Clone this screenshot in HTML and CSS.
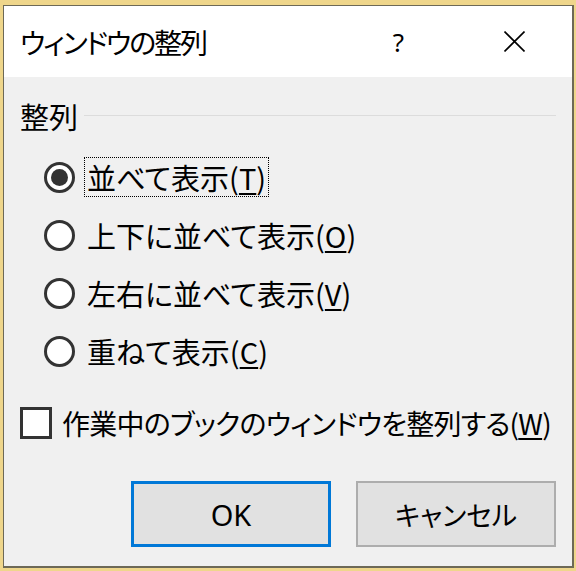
FILE: index.html
```html
<!DOCTYPE html>
<html lang="ja">
<head>
    <meta charset="UTF-8">
    <title>ウィンドウの整列</title>
    <link rel="stylesheet" href="styles.css">
</head>
<body>
    <div class="window">
        <div class="titlebar">
            <span class="title">ウィンドウの整列</span>
            <span class="tb-btn help">?</span>
            <span class="tb-btn close">
                <svg width="21" height="21" viewBox="0 0 21 21">
                    <path d="M0.5 0.5 L20.5 20.5 M20.5 0.5 L0.5 20.5" stroke="#000" stroke-width="1.6" fill="none"/>
                </svg>
            </span>
        </div>
        <div class="content">
            <div class="group-head">
                <span class="group-label">整列</span>
                <span class="rule"></span>
            </div>
            <div class="options">
                <label class="radio checked">
                    <span class="circle"></span>
                    <span class="text focus">並べて表示(<u>T</u>)</span>
                </label>
                <label class="radio">
                    <span class="circle"></span>
                    <span class="text">上下に並べて表示(<u>O</u>)</span>
                </label>
                <label class="radio">
                    <span class="circle"></span>
                    <span class="text">左右に並べて表示(<u>V</u>)</span>
                </label>
                <label class="radio">
                    <span class="circle"></span>
                    <span class="text">重ねて表示(<u>C</u>)</span>
                </label>
            </div>
            <label class="check">
                <span class="box"></span>
                <span class="text">作業中のブックのウィンドウを整列する(<u>W</u>)</span>
            </label>
            <div class="buttons">
                <button class="btn default">OK</button>
                <button class="btn">キャンセル</button>
            </div>
        </div>
    </div>
</body>
</html>
```

FILE: styles.css
```css
body {
    margin: 0;
    width: 576px;
    height: 571px;
    overflow: hidden;
    background-color: #efd68b;
    font-family: "Noto Sans CJK JP", "Noto Sans", sans-serif;
    font-feature-settings: "palt" 1;
    font-size: 27px;
    color: #000;
}
.window {
    margin: 5px 0 0 3px;
    width: 571px;
    height: 563px;
    box-sizing: border-box;
    border: 1px solid #6d6957;
    border-right-width: 2px;
    border-bottom-width: 2px;
    background-color: #f0f0f0;
    display: flex;
    flex-direction: column;
}
.titlebar {
    height: 71px;
    background-color: #fff;
    display: flex;
    align-items: stretch;
}
.title {
    flex: 1;
    padding-left: 16px;
    display: flex;
    align-items: center;
    font-size: 28px;
    letter-spacing: -2px;
}
.tb-btn {
    width: 115px;
    display: flex;
    align-items: center;
    justify-content: center;
}
.help {
    font-family: "Noto Sans", sans-serif;
    font-size: 26px;
    padding-right: 2px;
    box-sizing: border-box;
}
.content {
    flex: 1;
    padding: 23px 16px 0 16px;
}
.group-head {
    height: 31px;
    display: flex;
    align-items: center;
    gap: 6px;
    font-size: 29px;
}
.rule {
    flex: 1;
    height: 1px;
    background-color: #dcdcdc;
}
.options {
    margin-top: 17px;
    padding-left: 24px;
}
.radio {
    height: 58px;
    display: flex;
    align-items: center;
    font-size: 29px;
}
.circle {
    width: 31px;
    height: 31px;
    box-sizing: border-box;
    border: 3px solid #333;
    border-radius: 50%;
    background-color: #fff;
    display: flex;
    align-items: center;
    justify-content: center;
}
.radio.checked .circle:before {
    content: "";
    width: 17px;
    height: 17px;
    border-radius: 50%;
    background-color: #333;
}
.radio .text {
    margin-left: 9px;
    padding: 0 2px;
    height: 40px;
    line-height: 38px;
    box-sizing: border-box;
    border: 1px solid transparent;
}
.radio .text.focus {
    border: 1px dotted #000;
}
u {
    text-decoration-thickness: 2px;
    text-underline-offset: 3px;
}
.check {
    margin-top: 27px;
    height: 32px;
    display: flex;
    align-items: center;
    gap: 10px;
    font-size: 28px;
    letter-spacing: -0.75px;
}
.box {
    width: 32px;
    height: 32px;
    box-sizing: border-box;
    border: 3px solid #333;
    background-color: #fff;
}
.buttons {
    margin-top: 42px;
    display: flex;
    justify-content: flex-end;
    gap: 25px;
}
.btn {
    width: 200px;
    height: 66px;
    box-sizing: border-box;
    border: 2px solid #adadad;
    background-color: #e1e1e1;
    font-family: "Noto Sans CJK JP", "Noto Sans", sans-serif;
    font-feature-settings: "palt" 1;
    font-size: 27px;
    color: #000;
    padding: 0;
}
.btn.default {
    border: 3px solid #0078d7;
    font-family: "Noto Sans", sans-serif;
    font-size: 29px;
}
```
